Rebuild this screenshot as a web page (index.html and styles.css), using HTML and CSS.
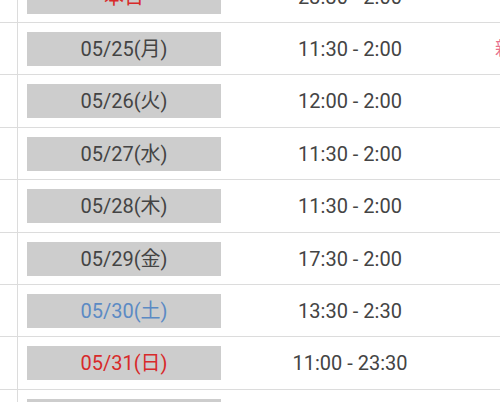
FILE: index.html
```html
<!DOCTYPE html>
<html lang="ja">
<head>
    <meta charset="UTF-8">
    <meta name="viewport" content="width=device-width, initial-scale=1.0">
    <title>営業時間</title>
    <link rel="stylesheet" href="styles.css">
</head>
<body>
    <div class="schedule">
        <div class="row">
            <div class="gutter"></div>
            <div class="day"><span class="label today">本日</span></div>
            <div class="time">23:30 - 2:00</div>
            <div class="note"></div>
        </div>
        <div class="row">
            <div class="gutter"></div>
            <div class="day"><span class="label">05/25(月)</span></div>
            <div class="time">11:30 - 2:00</div>
            <div class="note">新</div>
        </div>
        <div class="row">
            <div class="gutter"></div>
            <div class="day"><span class="label">05/26(火)</span></div>
            <div class="time">12:00 - 2:00</div>
            <div class="note"></div>
        </div>
        <div class="row">
            <div class="gutter"></div>
            <div class="day"><span class="label">05/27(水)</span></div>
            <div class="time">11:30 - 2:00</div>
            <div class="note"></div>
        </div>
        <div class="row">
            <div class="gutter"></div>
            <div class="day"><span class="label">05/28(木)</span></div>
            <div class="time">11:30 - 2:00</div>
            <div class="note"></div>
        </div>
        <div class="row">
            <div class="gutter"></div>
            <div class="day"><span class="label">05/29(金)</span></div>
            <div class="time">17:30 - 2:00</div>
            <div class="note"></div>
        </div>
        <div class="row">
            <div class="gutter"></div>
            <div class="day"><span class="label sat">05/30(土)</span></div>
            <div class="time">13:30 - 2:30</div>
            <div class="note"></div>
        </div>
        <div class="row">
            <div class="gutter"></div>
            <div class="day"><span class="label sun">05/31(日)</span></div>
            <div class="time">11:00 - 23:30</div>
            <div class="note"></div>
        </div>
        <div class="row">
            <div class="gutter"></div>
            <div class="day"><span class="label">06/01(月)</span></div>
            <div class="time">11:30 - 2:00</div>
            <div class="note"></div>
        </div>
    </div>
</body>
</html>
```

FILE: styles.css
```css
body {
    margin: 0;
    background: #fff;
    font-family: Roboto, "Noto Sans CJK JP", sans-serif;
    color: #444;
    overflow: hidden;
}
.schedule {
    margin-top: -29.4px;
    width: 520px;
}
.row {
    display: grid;
    grid-template-columns: 17px 214px 238px 51px;
    height: 52.4px;
    border-bottom: 1px solid #dcdcdc;
    box-sizing: border-box;
}
.day {
    border-left: 1px solid #dcdcdc;
    padding: 9px 10px 0 9px;
}
.label {
    display: block;
    height: 34px;
    line-height: 34px;
    background: #cdcdcd;
    text-align: center;
    font-size: 20px;
    color: #444;
}
.label.today,
.label.sun {
    color: #d82a2a;
}
.label.sat {
    color: #5b8ac4;
}
.time {
    padding-top: 9px;
    line-height: 34px;
    text-align: center;
    font-size: 20px;
}
.note {
    padding: 9px 0 0 26px;
    line-height: 34px;
    font-size: 18px;
    color: #e8708e;
}
```
